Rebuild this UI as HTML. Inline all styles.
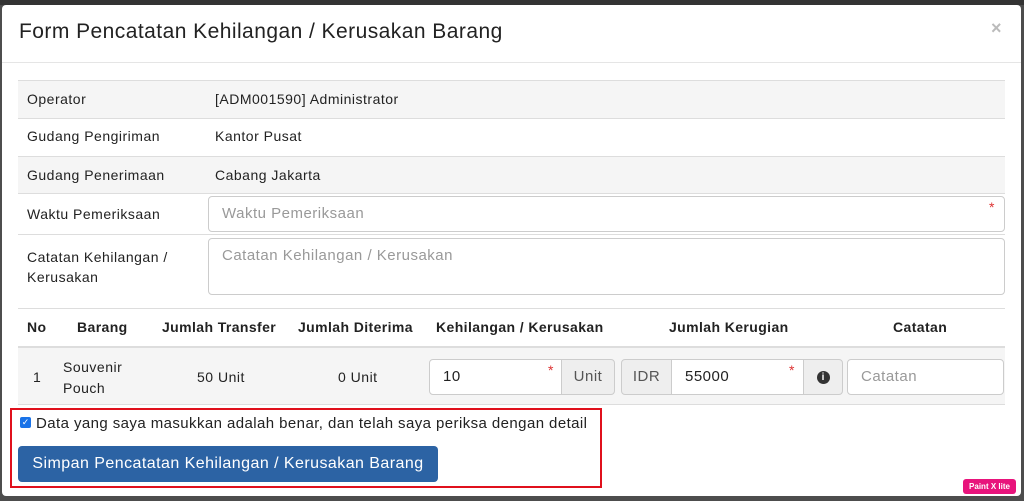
<!DOCTYPE html>
<html><head><style>
*{box-sizing:border-box;margin:0;padding:0}
body{width:1024px;height:501px;background:#4d4d4d;font-family:"Liberation Sans",sans-serif;color:#222;position:relative;overflow:hidden;font-size:14px;letter-spacing:0.5px}
.a{position:absolute}
.modal{left:2px;top:5px;width:1019px;height:491px;background:#fff;border-radius:4px}
.inp{border:1px solid #ccc;border-radius:4px;background:#fff;color:#999;font-size:15px;padding-left:13px}
.star{color:#d33;font-size:14px}
</style></head><body>
<div class="a" style="left:0;top:0;width:1024px;height:5px;background:#333"></div>
<div class="a modal"></div>
<div class="a" style="left:19px;top:20px;font-size:21px;letter-spacing:0.45px;color:#222">Form Pencatatan Kehilangan / Kerusakan Barang</div>
<div class="a" style="left:991px;top:18px;font-size:18px;color:#bbb;font-weight:bold">×</div>
<div class="a" style="left:2px;top:62px;width:1019px;height:1px;background:#e5e5e5"></div>

<div class="a" style="left:18px;top:80px;width:987px;height:38px;background:#f5f5f5;border-top:1px solid #ddd"></div>
<div class="a" style="left:18px;top:118px;width:987px;height:1px;background:#ddd"></div>
<div class="a" style="left:18px;top:156px;width:987px;height:38px;background:#f5f5f5;border-top:1px solid #ddd;border-bottom:1px solid #ddd"></div>
<div class="a" style="left:18px;top:234px;width:987px;height:1px;background:#ddd"></div>
<div class="a" style="left:27px;top:91px">Operator</div>
<div class="a" style="left:215px;top:91px">[ADM001590] Administrator</div>
<div class="a" style="left:27px;top:128px">Gudang Pengiriman</div>
<div class="a" style="left:215px;top:128px">Kantor Pusat</div>
<div class="a" style="left:27px;top:167px">Gudang Penerimaan</div>
<div class="a" style="left:215px;top:167px">Cabang Jakarta</div>
<div class="a" style="left:27px;top:206px">Waktu Pemeriksaan</div>
<div class="a inp" style="left:208px;top:196px;width:797px;height:36px;line-height:34px">Waktu Pemeriksaan</div>
<div class="a star" style="left:989px;top:199px">*</div>
<div class="a" style="left:27px;top:247px;line-height:20px">Catatan Kehilangan /<br>Kerusakan</div>
<div class="a inp" style="left:208px;top:238px;width:797px;height:57px;padding-top:8px">Catatan Kehilangan / Kerusakan</div>

<div class="a" style="left:18px;top:308px;width:987px;height:1px;background:#ddd"></div>
<div class="a" style="left:18px;top:346px;width:987px;height:59px;background:#f5f5f5;border-top:2px solid #ddd;border-bottom:1px solid #ddd"></div>
<div class="a" style="top:319px;left:0;width:1024px;font-weight:bold;font-size:14px;letter-spacing:0.4px">
<span class="a" style="left:27px">No</span><span class="a" style="left:77px">Barang</span><span class="a" style="left:162px">Jumlah Transfer</span><span class="a" style="left:298px">Jumlah Diterima</span><span class="a" style="left:436px">Kehilangan / Kerusakan</span><span class="a" style="left:669px">Jumlah Kerugian</span><span class="a" style="left:893px">Catatan</span></div>
<div class="a" style="left:33px;top:369px">1</div>
<div class="a" style="left:63px;top:357px;line-height:21px">Souvenir<br>Pouch</div>
<div class="a" style="left:197px;top:369px">50 Unit</div>
<div class="a" style="left:338px;top:369px">0 Unit</div>
<div class="a inp" style="left:429px;top:359px;width:133px;height:36px;line-height:34px;color:#222;border-radius:4px 0 0 4px">10</div>
<div class="a star" style="left:548px;top:362px">*</div>
<div class="a" style="left:561px;top:359px;width:54px;height:36px;background:#eee;border:1px solid #ccc;border-radius:0 4px 4px 0;line-height:34px;text-align:center;color:#555;font-size:15px">Unit</div>
<div class="a" style="left:621px;top:359px;width:51px;height:36px;background:#eee;border:1px solid #ccc;border-radius:4px 0 0 4px;line-height:34px;text-align:center;color:#555;font-size:15px">IDR</div>
<div class="a inp" style="left:671px;top:359px;width:133px;height:36px;line-height:34px;color:#222;border-radius:0">55000</div>
<div class="a star" style="left:789px;top:362px">*</div>
<div class="a" style="left:803px;top:359px;width:40px;height:36px;background:#eee;border:1px solid #ccc;border-radius:0 4px 4px 0"><div style="margin:11px auto 0;width:13px;height:13px;border-radius:50%;background:#333;color:#fff;font-size:10px;font-weight:bold;text-align:center;line-height:13px;letter-spacing:0">i</div></div>
<div class="a inp" style="left:847px;top:359px;width:157px;height:36px;line-height:34px">Catatan</div>

<div class="a" style="left:10px;top:408px;width:592px;height:80px;border:2px solid #e0101c"></div>
<div class="a" style="left:20px;top:417px;width:11px;height:11px;background:#1a73e8;border-radius:2px;color:#fff;font-size:9px;text-align:center;line-height:11px;letter-spacing:0">✓</div>
<div class="a" style="left:36px;top:415px;font-size:15px;letter-spacing:0.42px">Data yang saya masukkan adalah benar, dan telah saya periksa dengan detail</div>
<div class="a" style="left:18px;top:446px;width:420px;height:36px;background:#2c63a4;border-radius:4px;color:#fff;font-size:16px;letter-spacing:0.45px;line-height:36px;text-align:center">Simpan Pencatatan Kehilangan / Kerusakan Barang</div>
<div class="a" style="left:963px;top:479px;width:53px;height:15px;background:#e8147c;border-radius:3px;color:#fff;font-size:8px;font-weight:bold;text-align:center;line-height:15px;letter-spacing:0">Paint X lite</div>
</body></html>
